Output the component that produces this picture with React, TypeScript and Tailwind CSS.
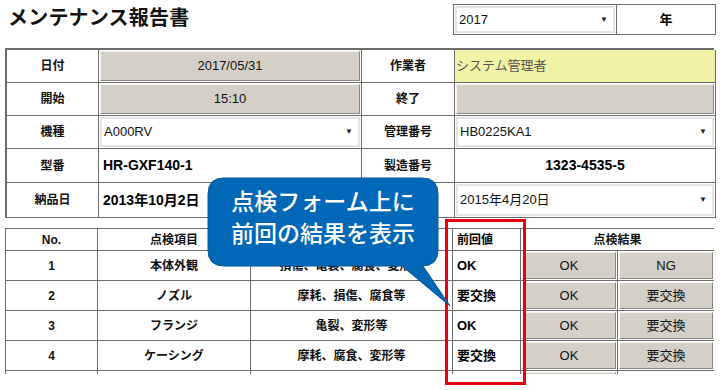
import React from "react";

const FONT = { fontFamily: '"Liberation Sans", Arial, "Noto Sans CJK JP", sans-serif' };

function Gray({ children, className = "" }: { children?: React.ReactNode; className?: string }) {
  return (
    <div className="h-full p-px">
      <div
        className={
          "h-full flex items-center justify-center bg-[#d4d0c8] border border-t-[#f4f2ee] border-l-[#f4f2ee] border-b-[#8a8780] border-r-[#8a8780] text-[13px] text-[#111] " +
          className
        }
      >
        {children}
      </div>
    </div>
  );
}

function Sel({ children, bold = false }: { children: React.ReactNode; bold?: boolean }) {
  return (
    <div className="h-full p-px">
      <div className="h-full flex items-center justify-between bg-white border-2 border-[#e4e4e4] pl-[2px] pr-[5px]">
        <span className={"text-[13px] text-[#111] " + (bold ? "font-bold" : "")}>{children}</span>
        <span className="text-[8px] text-[#222]">▼</span>
      </div>
    </div>
  );
}

function Label({ children }: { children?: React.ReactNode }) {
  return <div className="h-full flex items-center justify-center text-[12px] font-bold text-[#111]">{children}</div>;
}

const cellB = "border-r border-b border-[#6d6d6d] overflow-hidden";

export default function App() {
  const rows = [
    { no: "1", item: "本体外観", cont: "損傷、亀裂、腐食、変形等", prev: "OK", r2: "NG" },
    { no: "2", item: "ノズル", cont: "摩耗、損傷、腐食等", prev: "要交換", r2: "要交換" },
    { no: "3", item: "フランジ", cont: "亀裂、変形等", prev: "OK", r2: "要交換" },
    { no: "4", item: "ケーシング", cont: "摩耗、腐食、変形等", prev: "要交換", r2: "要交換" },
  ];
  return (
    <div className="relative w-[720px] h-[390px] bg-white overflow-hidden" style={FONT}>
      {/* header */}
      <div className="flex items-start h-[48px]">
        <div className="pl-[8px] pt-[4px] text-[20px] font-bold leading-[28px] text-[#111] tracking-[0.2px]">
          メンテナンス報告書
        </div>
        <div className="ml-auto mr-[4px] mt-[4px] flex h-[31px] border border-[#6d6d6d]">
          <div className="w-[163px] border-r border-[#6d6d6d]">
            <Sel>2017</Sel>
          </div>
          <div className="w-[98px] flex items-center justify-center text-[13px] font-bold">年</div>
        </div>
      </div>

      {/* table 1 */}
      <div className="ml-[5px] w-[709px] grid grid-cols-[92px_263px_93px_261px] grid-rows-[33px_33px_33px_34px_35px] border-t-2 border-l-2 border-[#6d6d6d]">
        <div className={cellB}><Label>日付</Label></div>
        <div className={cellB}><Gray>2017/05/31</Gray></div>
        <div className={cellB}><Label>作業者</Label></div>
        <div className={cellB + " bg-[#f2f2a6] flex items-center text-[13px] text-[#555] pl-[1px]"}>システム管理者</div>

        <div className={cellB}><Label>開始</Label></div>
        <div className={cellB}><Gray>15:10</Gray></div>
        <div className={cellB}><Label>終了</Label></div>
        <div className={cellB}><Gray /></div>

        <div className={cellB}><Label>機種</Label></div>
        <div className={cellB}><Sel>A000RV</Sel></div>
        <div className={cellB}><Label>管理番号</Label></div>
        <div className={cellB}><Sel>HB0225KA1</Sel></div>

        <div className={cellB}><Label>型番</Label></div>
        <div className={cellB + " flex items-center pl-[4px] text-[14px] font-bold"}>HR-GXF140-1</div>
        <div className={cellB}><Label>製造番号</Label></div>
        <div className={cellB + " flex items-center justify-center text-[14px] font-bold"}>1323-4535-5</div>

        <div className={cellB}><Label>納品日</Label></div>
        <div className={cellB + " flex items-center pl-[4px] text-[14px] font-bold"}>2013年10月2日</div>
        <div className={cellB}><Label /></div>
        <div className={cellB}><Sel>2015年4月20日</Sel></div>
      </div>

      {/* table 2 */}
      <div className="mt-[10px] ml-[5px] w-[709px] h-[146px] overflow-hidden">
        <div className="grid grid-cols-[92px_153px_202px_68px_97px_97px] grid-rows-[22px_30px_30px_30px_30px_30px] border-t border-l border-[#6d6d6d]">
          <div className={cellB}><Label>No.</Label></div>
          <div className={cellB}><Label>点検項目</Label></div>
          <div className={cellB}><Label /></div>
          <div className={cellB + " flex items-center pl-[4px] text-[12px] font-bold"}>前回値</div>
          <div className={"col-span-2 " + cellB}><Label>点検結果</Label></div>
          {rows.map((r) => (
            <React.Fragment key={r.no}>
              <div className={cellB}><Label>{r.no}</Label></div>
              <div className={cellB}><Label>{r.item}</Label></div>
              <div className={cellB}><Label>{r.cont}</Label></div>
              <div className={cellB + " flex items-center pl-[4px] text-[13px] font-bold"}>{r.prev}</div>
              <div className={cellB}><Gray>OK</Gray></div>
              <div className={cellB}><Gray>{r.r2}</Gray></div>
            </React.Fragment>
          ))}
          <div className={cellB} />
          <div className={cellB} />
          <div className={cellB} />
          <div className={cellB} />
          <div className={cellB}><Gray className="bg-[#bfe3b4]" /></div>
          <div className={cellB} />
        </div>
      </div>

      {/* red highlight */}
      <div className="absolute left-[445px] top-[219px] w-[81px] h-[166px] border-[3px] border-[#e60012]" />

      {/* callout */}
      <svg className="absolute left-0 top-0" width="720" height="390" viewBox="0 0 720 390">
        <path
          d="M224 178 H422 Q438 178 438 194 V250 Q438 266 422 266 H423 L450 306 L402 266 H224 Q208 266 208 250 V194 Q208 178 224 178 Z"
          fill="#0068b7"
          stroke="#0a5798"
          strokeWidth="1"
        />
      </svg>
      <div
        className="absolute left-[208px] top-[184px] w-[230px] flex flex-col items-center text-white text-[23px] leading-[32px] font-medium"
        style={{ fontFamily: '"Noto Sans CJK JP", sans-serif' }}
      >
        <div>点検フォーム上に</div>
        <div>前回の結果を表示</div>
      </div>
    </div>
  );
}
